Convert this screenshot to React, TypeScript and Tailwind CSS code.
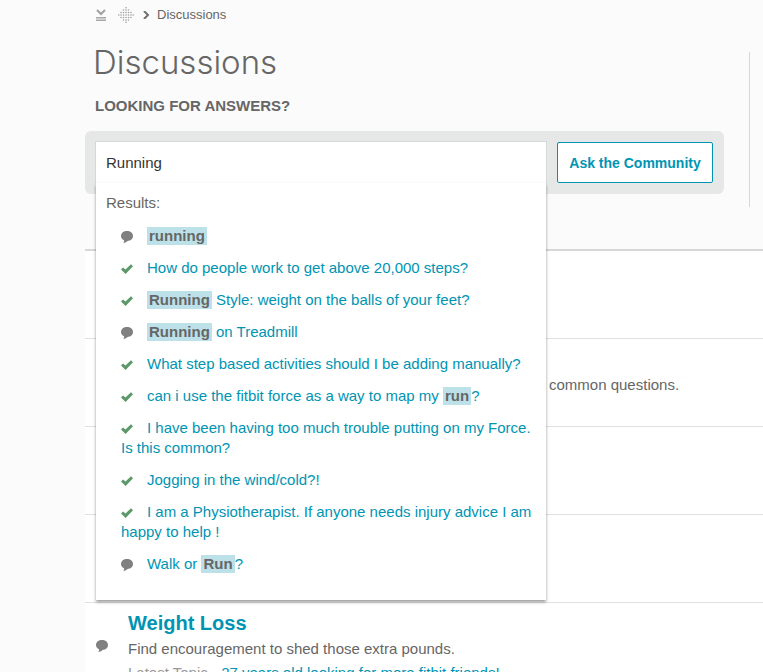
import { useState } from "react";

type Kind = "topic" | "solved";

type Part = string | { mark: string };

const results: { kind: Kind; parts: Part[] }[] = [
  { kind: "topic", parts: [{ mark: "running" }] },
  {
    kind: "solved",
    parts: ["How do people work to get above 20,000 steps?"],
  },
  {
    kind: "solved",
    parts: [{ mark: "Running" }, " Style: weight on the balls of your feet?"],
  },
  { kind: "topic", parts: [{ mark: "Running" }, " on Treadmill"] },
  {
    kind: "solved",
    parts: ["What step based activities should I be adding manually?"],
  },
  {
    kind: "solved",
    parts: [
      "can i use the fitbit force as a way to map my ",
      { mark: "run" },
      "?",
    ],
  },
  {
    kind: "solved",
    parts: [
      "I have been having too much trouble putting on my Force. Is this common?",
    ],
  },
  { kind: "solved", parts: ["Jogging in the wind/cold?!"] },
  {
    kind: "solved",
    parts: [
      "I am a Physiotherapist. If anyone needs injury advice I am happy to help !",
    ],
  },
  { kind: "topic", parts: ["Walk or ", { mark: "Run" }, "?"] },
];

function BubbleIcon() {
  return (
    <svg
      className="block h-3 w-3 fill-[#808080]"
      viewBox="0 0 12 12"
      aria-hidden="true"
    >
      <path d="M6 0C9.300 0 12 2 12 4.900C12 7.700 9.600 9.500 7 9.800C6 11 4.200 11.800 2.200 12C3 11.200 3.200 10.200 3 9.200C1.200 8.400 0 6.900 0 4.900C0 2 2.700 0 6 0Z" />
    </svg>
  );
}

function CheckIcon() {
  return (
    <svg
      className="block h-3 w-3 fill-[#5b9a68]"
      viewBox="0 0 12 12"
      aria-hidden="true"
    >
      <path d="M0 6.500L2 4.500L4.500 6.600L10 1.200L12 3.200L4.600 11Z" />
    </svg>
  );
}

function CollapseIcon() {
  return (
    <svg className="h-3 w-3" viewBox="0 0 12 12" fill="none" aria-hidden="true">
      <path d="M2 1L6 5L10 1" stroke="#a0a0a0" strokeWidth="2" />
      <path d="M1 8.500H11M1 11.500H11" stroke="#a8a8a8" strokeWidth="1" />
      <path d="M1 9H11V11H1Z" fill="#cfcfcf" />
    </svg>
  );
}

const steps = [0.8, 3, 5.5, 8, 10.5, 13, 15.2];

// how many dots stand on each side of the middle one, row by row
const reach = [0, 1, 2, 3, 2, 1, 0];

function DotsLogo() {
  return (
    <svg
      className="h-4 w-4 fill-[#a0a0a0]"
      viewBox="0 0 16 16"
      aria-hidden="true"
    >
      {steps.map((cy, row) =>
        steps
          .filter((_, col) => Math.abs(col - 3) <= reach[row])
          .map((cx) => <circle key={`${cx}-${cy}`} cx={cx} cy={cy} r={0.8} />)
      )}
    </svg>
  );
}

function Result({ kind, parts }: { kind: Kind; parts: Part[] }) {
  return (
    <li>
      <span className="mr-3.5 inline-block h-3 w-3 align-[-2px]">
        {kind === "topic" ? <BubbleIcon /> : <CheckIcon />}
      </span>
      <a href="#" className="text-[#0094b3]">
        {parts.map((part, i) =>
          typeof part === "string" ? (
            part
          ) : (
            <mark
              key={i}
              className="bg-[#bce1e8] px-0.5 pb-px font-bold text-[#666666]"
            >
              {part.mark}
            </mark>
          )
        )}
      </a>
    </li>
  );
}

function App() {
  const [query, setQuery] = useState("Running");

  return (
    <div className="min-h-screen bg-[#fbfbfb] pl-[85px] font-['Liberation_Sans',Arial,sans-serif] text-[15px] text-[#666666]">
      <header className="border-b-2 border-[#d6d8d8] pb-[55px]">
        <nav className="flex h-[30px] items-center pl-2.5 text-[13px]">
          <a href="#" aria-label="Collapse" className="mr-[11px]">
            <CollapseIcon />
          </a>
          <a href="#" aria-label="Home" className="mr-2">
            <DotsLogo />
          </a>
          <svg
            className="mr-[7px] h-2 w-2"
            viewBox="0 0 8 8"
            fill="none"
            aria-hidden="true"
          >
            <path d="M2 0L6 4L2 8" stroke="#707070" strokeWidth="2" />
          </svg>
          <a href="#">Discussions</a>
        </nav>
        <div className="flex pt-[22px]">
          <div className="flex-1">
            <h1 className="pl-2 font-['Inter',sans-serif] text-[33px] leading-5 font-light">
              Discussions
            </h1>
            <h2 className="mt-6 pl-2.5 leading-5 font-bold">
              LOOKING FOR ANSWERS?
            </h2>
            <form
              className="mt-[15px] flex rounded-md bg-[#e5e8e7] py-2.5 pr-[11px] pl-2.5"
              onSubmit={(e) => e.preventDefault()}
            >
              <div className="relative mr-2.5 flex-1">
                <input
                  type="text"
                  aria-label="Search discussions"
                  className="block h-[43px] w-full border border-[#d6d8d8] bg-white px-2.5 text-[#333333] outline-none"
                  value={query}
                  onChange={(e) => setQuery(e.target.value)}
                />
                <div className="absolute top-[42px] right-px left-px bg-white pt-2.5 pr-2 pb-[26px] pl-2.5 leading-5 shadow-[0_2px_3px_rgba(0,0,0,0.4)]">
                  <p>Results:</p>
                  <ul className="mt-[13px] flex flex-col gap-3 pl-[15px]">
                    {results.map((result, i) => (
                      <Result key={i} {...result} />
                    ))}
                  </ul>
                </div>
              </div>
              <button
                type="submit"
                className="my-px w-[156px] rounded-xs border border-[#0094b3] bg-white text-sm font-bold text-[#0094b3]"
              >
                Ask the Community
              </button>
            </form>
          </div>
          <div className="mb-[-13px] ml-[25px] w-3.5 border-l border-[#d6d8d8]" />
        </div>
      </header>

      <main className="bg-white leading-5">
        <div className="h-22 border-b border-[#e0e0e0]" />
        <div className="h-22 border-b border-[#e0e0e0] pt-9 pl-[464px]">
          common questions.
        </div>
        <div className="h-22 border-b border-[#e0e0e0]" />
        <div className="h-22 border-b border-[#e0e0e0]" />
        <article className="flex h-22 items-start pl-[11px]">
          <span className="mt-[37px] mr-5 h-3 w-3">
            <BubbleIcon />
          </span>
          <div className="pt-2">
            <h3 className="text-xl leading-6 font-bold text-[#0094b3]">
              <a href="#">Weight Loss</a>
            </h3>
            <p className="mt-1">
              Find encouragement to shed those extra pounds.
            </p>
            <p className="mt-1 text-[#999999]">
              Latest Topic -{" "}
              <a href="#" className="text-[#0094b3]">
                27 years old looking for more fitbit friends!
              </a>
            </p>
          </div>
        </article>
      </main>
    </div>
  );
}

export default App;
